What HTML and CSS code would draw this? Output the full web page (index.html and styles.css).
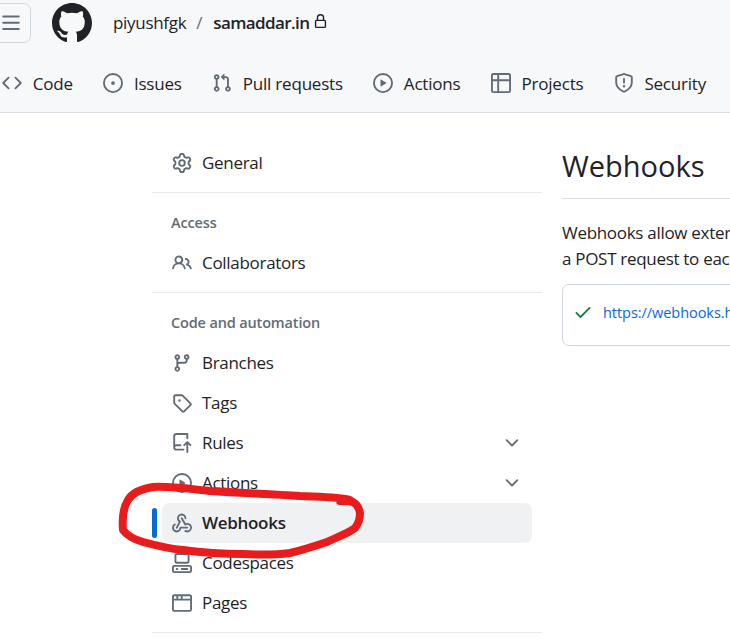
FILE: index.html
```html
<!DOCTYPE html>
<html lang="en">
<head>
<meta charset="UTF-8" />
<title>Webhooks</title>
<link rel="stylesheet" href="styles.css">
</head>
<body>

<header class="header">
  <div class="top-row">
    <button class="menu-btn" aria-label="Open menu">
      <svg class="icon" viewBox="0 0 16 16"><path d="M1 2.75A.75.75 0 0 1 1.75 2h12.5a.75.75 0 0 1 0 1.5H1.75A.75.75 0 0 1 1 2.75Zm0 5A.75.75 0 0 1 1.75 7h12.5a.75.75 0 0 1 0 1.5H1.75A.75.75 0 0 1 1 7.75ZM1.75 12h12.5a.75.75 0 0 1 0 1.5H1.75a.75.75 0 0 1 0-1.5Z"/></svg>
    </button>
    <svg class="logo" viewBox="0 0 16 16"><path d="M8 0c4.42 0 8 3.58 8 8a8.013 8.013 0 0 1-5.45 7.59c-.4.08-.55-.17-.55-.38 0-.27.01-1.13.01-2.2 0-.75-.25-1.23-.54-1.48 1.78-.2 3.65-.88 3.65-3.95 0-.88-.31-1.59-.82-2.15.08-.2.36-1.02-.08-2.12 0 0-.67-.22-2.2.82-.64-.18-1.32-.27-2-.27-.68 0-1.36.09-2 .27-1.53-1.03-2.2-.82-2.2-.82-.44 1.1-.16 1.92-.08 2.12-.51.56-.82 1.28-.82 2.15 0 3.06 1.86 3.75 3.64 3.95-.23.2-.44.55-.51 1.07-.46.21-1.61.55-2.33-.66-.15-.24-.6-.83-1.23-.82-.67.01-.27.38.01.53.34.19.73.9.82 1.13.16.45.68 1.31 2.69.94 0 .67.01 1.3.01 1.49 0 .21-.15.45-.55.38A7.995 7.995 0 0 1 0 8c0-4.42 3.58-8 8-8Z"/></svg>
    <span class="crumb">piyushfgk</span>
    <span class="crumb-sep">/</span>
    <strong class="crumb-repo">samaddar.in</strong>
    <svg class="lock" viewBox="0 0 16 16"><path d="M4 4a4 4 0 0 1 8 0v2h.25c.966 0 1.75.784 1.75 1.75v5.5A1.75 1.75 0 0 1 12.25 15h-8.5A1.75 1.75 0 0 1 2 13.25v-5.5C2 6.784 2.784 6 3.75 6H4Zm8.25 3.5h-8.5a.25.25 0 0 0-.25.25v5.5c0 .138.112.25.25.25h8.5a.25.25 0 0 0 .25-.25v-5.5a.25.25 0 0 0-.25-.25ZM10.5 6V4a2.5 2.5 0 1 0-5 0v2Z"/></svg>
  </div>
  <nav class="repo-nav">
    <a class="tab">
      <svg class="icon" viewBox="0 0 16 16"><path d="m11.28 3.22 4.25 4.25a.75.75 0 0 1 0 1.06l-4.25 4.25a.749.749 0 0 1-1.275-.326.749.749 0 0 1 .215-.734L13.94 8l-3.72-3.72a.749.749 0 0 1 .326-1.275.749.749 0 0 1 .734.215Zm-6.56 0a.751.751 0 0 1 1.042.018.751.751 0 0 1 .018 1.042L2.06 8l3.72 3.72a.749.749 0 0 1-.326 1.275.749.749 0 0 1-.734-.215L.47 8.53a.75.75 0 0 1 0-1.06Z"/></svg>
      Code
    </a>
    <a class="tab">
      <svg class="icon" viewBox="0 0 16 16"><path d="M8 9.5a1.5 1.5 0 1 0 0-3 1.5 1.5 0 0 0 0 3Z"/><path d="M8 0a8 8 0 1 1 0 16A8 8 0 0 1 8 0ZM1.5 8a6.5 6.5 0 1 0 13 0 6.5 6.5 0 0 0-13 0Z"/></svg>
      Issues
    </a>
    <a class="tab">
      <svg class="icon" viewBox="0 0 16 16"><path d="M1.5 3.25a2.25 2.25 0 1 1 3 2.122v5.256a2.251 2.251 0 1 1-1.5 0V5.372A2.25 2.25 0 0 1 1.5 3.25Zm5.677-.177L9.573.677A.25.25 0 0 1 10 .854V2.5h1A2.5 2.5 0 0 1 13.5 5v5.628a2.251 2.251 0 1 1-1.5 0V5a1 1 0 0 0-1-1h-1v1.646a.25.25 0 0 1-.427.177L7.177 3.427a.25.25 0 0 1 0-.354ZM3.75 2.5a.75.75 0 1 0 0 1.5.75.75 0 0 0 0-1.5Zm0 9.5a.75.75 0 1 0 0 1.5.75.75 0 0 0 0-1.5Zm8.25.75a.75.75 0 1 0 1.5 0 .75.75 0 0 0-1.5 0Z"/></svg>
      Pull requests
    </a>
    <a class="tab">
      <svg class="icon" viewBox="0 0 16 16"><path d="M8 0a8 8 0 1 1 0 16A8 8 0 0 1 8 0ZM1.5 8a6.5 6.5 0 1 0 13 0 6.5 6.5 0 0 0-13 0Zm4.879-2.773 4.264 2.559a.25.25 0 0 1 0 .428l-4.264 2.559A.25.25 0 0 1 6 10.559V5.442a.25.25 0 0 1 .379-.215Z"/></svg>
      Actions
    </a>
    <a class="tab">
      <svg class="icon" viewBox="0 0 16 16"><path d="M0 1.75C0 .784.784 0 1.75 0h12.5C15.216 0 16 .784 16 1.75v12.5A1.75 1.75 0 0 1 14.25 16H1.75A1.75 1.75 0 0 1 0 14.25ZM6.5 6.5v8h7.75a.25.25 0 0 0 .25-.25V6.5Zm8-1.5V1.75a.25.25 0 0 0-.25-.25H6.5V5Zm-13 1.5v7.75c0 .138.112.25.25.25H5v-8ZM5 5V1.5H1.75a.25.25 0 0 0-.25.25V5Z"/></svg>
      Projects
    </a>
    <a class="tab">
      <svg class="icon" viewBox="0 0 16 16"><path d="M7.467.133a1.748 1.748 0 0 1 1.066 0l5.25 1.68A1.75 1.75 0 0 1 15 3.48V7c0 1.566-.32 3.182-1.303 4.682-.983 1.498-2.585 2.813-5.032 3.855a1.697 1.697 0 0 1-1.33 0c-2.447-1.042-4.049-2.357-5.032-3.855C1.32 10.182 1 8.566 1 7V3.48a1.75 1.75 0 0 1 1.217-1.667Zm.61 1.429a.25.25 0 0 0-.153 0l-5.25 1.68a.25.25 0 0 0-.174.238V7c0 1.358.275 2.666 1.057 3.86.784 1.194 2.121 2.34 4.366 3.297a.196.196 0 0 0 .154 0c2.245-.956 3.582-2.104 4.366-3.298C13.225 9.666 13.5 8.36 13.5 7V3.48a.251.251 0 0 0-.174-.237l-5.25-1.68ZM8.75 4.75v3a.75.75 0 0 1-1.5 0v-3a.75.75 0 0 1 1.5 0ZM9 10.5a1 1 0 1 1-2 0 1 1 0 0 1 2 0Z"/></svg>
      Security
    </a>
  </nav>
</header>

<div class="layout">
  <aside class="sidebar">
    <div class="group">
      <a class="item">
        <svg class="icon" viewBox="0 0 16 16"><path d="M8 0a8.2 8.2 0 0 1 .701.031C9.444.095 9.99.645 10.16 1.29l.288 1.107c.018.066.079.158.212.224.231.114.454.243.668.386.123.082.233.09.299.071l1.103-.303c.644-.176 1.392.021 1.82.63.27.385.506.792.704 1.218.315.675.111 1.422-.364 1.891l-.814.806c-.049.048-.098.147-.088.294.016.257.016.515 0 .772-.01.147.038.246.088.294l.814.806c.475.469.679 1.216.364 1.891a7.977 7.977 0 0 1-.704 1.217c-.428.61-1.176.807-1.82.63l-1.102-.302c-.067-.019-.177-.011-.3.071a5.909 5.909 0 0 1-.668.386c-.133.066-.194.158-.211.224l-.29 1.106c-.168.646-.715 1.196-1.458 1.26a8.006 8.006 0 0 1-1.402 0c-.743-.064-1.289-.614-1.458-1.26l-.289-1.106c-.018-.066-.079-.158-.212-.224a5.738 5.738 0 0 1-.668-.386c-.123-.082-.233-.09-.299-.071l-1.103.303c-.644.176-1.392-.021-1.82-.63a8.12 8.12 0 0 1-.704-1.218c-.315-.675-.111-1.422.363-1.891l.815-.806c.05-.048.098-.147.088-.294a6.214 6.214 0 0 1 0-.772c.01-.147-.038-.246-.088-.294l-.815-.806C.635 6.045.431 5.298.746 4.623a7.92 7.92 0 0 1 .704-1.217c.428-.61 1.176-.807 1.82-.63l1.102.302c.067.019.177.011.3-.071.214-.143.437-.272.668-.386.133-.066.194-.158.211-.224l.29-1.106C6.009.645 6.556.095 7.299.03 7.53.01 7.764 0 8 0Zm-.571 1.525c-.036.003-.108.036-.137.146l-.289 1.105c-.147.561-.549.967-.998 1.189-.173.086-.34.183-.5.29-.417.278-.97.423-1.529.27l-1.103-.303c-.109-.03-.175.016-.195.045-.22.312-.412.644-.573.99-.014.031-.021.11.059.19l.815.806c.411.406.562.957.53 1.456a4.709 4.709 0 0 0 0 .582c.032.499-.119 1.05-.53 1.456l-.815.806c-.081.08-.073.159-.059.19.162.346.353.677.573.989.02.03.085.076.195.046l1.102-.303c.56-.153 1.113-.008 1.53.27.161.107.328.204.501.29.447.222.85.629.997 1.189l.289 1.105c.029.109.101.143.137.146a6.6 6.6 0 0 0 1.142 0c.036-.003.108-.036.137-.146l.289-1.105c.147-.561.549-.967.998-1.189.173-.086.34-.183.5-.29.417-.278.97-.423 1.529-.27l1.103.303c.109.029.175-.016.195-.045.22-.313.411-.644.573-.99.014-.031.021-.11-.059-.19l-.815-.806c-.411-.406-.562-.957-.53-1.456a4.709 4.709 0 0 0 0-.582c-.032-.499.119-1.05.53-1.456l.815-.806c.081-.08.073-.159.059-.19a6.464 6.464 0 0 0-.573-.989c-.02-.03-.085-.076-.195-.046l-1.102.303c-.56.153-1.113.008-1.53-.27a4.44 4.44 0 0 0-.501-.29c-.447-.222-.85-.629-.997-1.189l-.289-1.105c-.029-.11-.101-.143-.137-.146a6.6 6.6 0 0 0-1.142 0ZM11 8a3 3 0 1 1-6 0 3 3 0 0 1 6 0ZM9.5 8a1.5 1.5 0 1 0-3.001.001A1.5 1.5 0 0 0 9.5 8Z"/></svg>
        <span class="label">General</span>
      </a>
    </div>
    <div class="group">
      <h3 class="group-title">Access</h3>
      <a class="item">
        <svg class="icon" viewBox="0 0 16 16"><path d="M2 5.5a3.5 3.5 0 1 1 5.898 2.549 5.508 5.508 0 0 1 3.034 4.084.75.75 0 1 1-1.482.235 4 4 0 0 0-7.9 0 .75.75 0 0 1-1.482-.236A5.507 5.507 0 0 1 3.102 8.05 3.493 3.493 0 0 1 2 5.5ZM11 4a3.001 3.001 0 0 1 2.22 5.018 5.01 5.01 0 0 1 2.56 3.012.749.749 0 0 1-.885.954.752.752 0 0 1-.549-.514 3.507 3.507 0 0 0-2.522-2.372.75.75 0 0 1-.574-.73v-.352a.75.75 0 0 1 .416-.672A1.5 1.5 0 0 0 11 5.5.75.75 0 0 1 11 4Zm-5.5-.5a2 2 0 1 0-.001 3.999A2 2 0 0 0 5.5 3.5Z"/></svg>
        <span class="label">Collaborators</span>
      </a>
    </div>
    <div class="group">
      <h3 class="group-title">Code and automation</h3>
      <a class="item">
        <svg class="icon" viewBox="0 0 16 16"><path d="M9.5 3.25a2.25 2.25 0 1 1 3 2.122V6A2.5 2.5 0 0 1 10 8.5H6a1 1 0 0 0-1 1v1.128a2.251 2.251 0 1 1-1.5 0V5.372a2.25 2.25 0 1 1 1.5 0v1.836A2.493 2.493 0 0 1 6 7h4a1 1 0 0 0 1-1v-.628A2.25 2.25 0 0 1 9.5 3.25Zm-6 0a.75.75 0 1 0 1.5 0 .75.75 0 0 0-1.5 0Zm8.25-.75a.75.75 0 1 0 0 1.5.75.75 0 0 0 0-1.5ZM4.25 12a.75.75 0 1 0 0 1.5.75.75 0 0 0 0-1.5Z"/></svg>
        <span class="label">Branches</span>
      </a>
      <a class="item">
        <svg class="icon" viewBox="0 0 16 16"><path d="M1 7.775V2.75C1 1.784 1.784 1 2.75 1h5.025c.464 0 .91.184 1.238.513l6.25 6.25a1.75 1.75 0 0 1 0 2.474l-5.026 5.026a1.75 1.75 0 0 1-2.474 0l-6.25-6.25A1.752 1.752 0 0 1 1 7.775Zm1.5 0c0 .066.026.13.073.177l6.25 6.25a.25.25 0 0 0 .354 0l5.025-5.025a.25.25 0 0 0 0-.354l-6.25-6.25a.25.25 0 0 0-.177-.073H2.75a.25.25 0 0 0-.25.25ZM6 5a1 1 0 1 1 0 2 1 1 0 0 1 0-2Z"/></svg>
        <span class="label">Tags</span>
      </a>
      <a class="item">
        <svg class="icon" viewBox="0 0 16 16"><path d="M1 2.5A2.5 2.5 0 0 1 3.5 0h8.75a.75.75 0 0 1 .75.75v3.5a.75.75 0 0 1-1.5 0V1.5h-8a1 1 0 0 0-1 1v6.708A2.493 2.493 0 0 1 3.5 9h3.25a.75.75 0 0 1 0 1.5H3.5a1 1 0 0 0 0 2h5.75a.75.75 0 0 1 0 1.5H3.5A2.5 2.5 0 0 1 1 11.5Zm13.23 7.79h-.001l-1.224-1.224v6.184a.75.75 0 0 1-1.5 0V9.066L10.28 10.29a.75.75 0 0 1-1.06-1.061l2.505-2.504a.75.75 0 0 1 1.06 0L15.29 9.23a.751.751 0 0 1-.018 1.042.751.751 0 0 1-1.042.018Z"/></svg>
        <span class="label">Rules</span>
        <svg class="chevron" viewBox="0 0 16 16"><path d="M12.78 5.22a.749.749 0 0 1 0 1.06l-4.25 4.25a.749.749 0 0 1-1.06 0L3.22 6.28a.749.749 0 1 1 1.06-1.06L8 8.939l3.72-3.719a.749.749 0 0 1 1.06 0Z"/></svg>
      </a>
      <a class="item">
        <svg class="icon" viewBox="0 0 16 16"><path d="M8 0a8 8 0 1 1 0 16A8 8 0 0 1 8 0ZM1.5 8a6.5 6.5 0 1 0 13 0 6.5 6.5 0 0 0-13 0Zm4.879-2.773 4.264 2.559a.25.25 0 0 1 0 .428l-4.264 2.559A.25.25 0 0 1 6 10.559V5.442a.25.25 0 0 1 .379-.215Z"/></svg>
        <span class="label">Actions</span>
        <svg class="chevron" viewBox="0 0 16 16"><path d="M12.78 5.22a.749.749 0 0 1 0 1.06l-4.25 4.25a.749.749 0 0 1-1.06 0L3.22 6.28a.749.749 0 1 1 1.06-1.06L8 8.939l3.72-3.719a.749.749 0 0 1 1.06 0Z"/></svg>
      </a>
      <a class="item active">
        <svg class="icon" viewBox="0 0 16 16"><path d="M5.5 4.25a2.25 2.25 0 0 1 4.5 0 .75.75 0 0 0 1.5 0 3.75 3.75 0 1 0-6.14 2.889l-2.272 4.258a.75.75 0 0 0 1.324.706L7 7.25a.75.75 0 0 0-.309-1.015A2.25 2.25 0 0 1 5.5 4.25Z"/><path d="M7.364 3.607a.75.75 0 0 1 1.03.257l2.608 4.349a3.75 3.75 0 1 1-.628 6.785.75.75 0 0 1 .752-1.299 2.25 2.25 0 1 0-.033-3.88.75.75 0 0 1-1.03-.256L7.107 4.636a.75.75 0 0 1 .257-1.03Z"/><path d="M2.9 8.776A.75.75 0 0 1 2.625 9.8 2.25 2.25 0 1 0 6 11.75a.75.75 0 0 1 .75-.751h5.5a.75.75 0 0 1 0 1.5H7.425a3.751 3.751 0 1 1-5.55-3.998.75.75 0 0 1 1.024.274Z"/></svg>
        <span class="label">Webhooks</span>
      </a>
      <a class="item">
        <svg class="icon" viewBox="0 0 16 16"><path d="M0 11.25c0-.966.784-1.75 1.75-1.75h12.5c.966 0 1.75.784 1.75 1.75v3A1.75 1.75 0 0 1 14.25 16H1.75A1.75 1.75 0 0 1 0 14.25Zm2-9.5C2 .784 2.784 0 3.75 0h8.5C13.216 0 14 .784 14 1.75v5a1.75 1.75 0 0 1-1.75 1.75h-8.5A1.75 1.75 0 0 1 2 6.75Zm1.75-.25a.25.25 0 0 0-.25.25v5c0 .138.112.25.25.25h8.5a.25.25 0 0 0 .25-.25v-5a.25.25 0 0 0-.25-.25Zm-2 9.5a.25.25 0 0 0-.25.25v3c0 .138.112.25.25.25h12.5a.25.25 0 0 0 .25-.25v-3a.25.25 0 0 0-.25-.25Z"/><path d="M7 12.75a.75.75 0 0 1 .75-.75h4.5a.75.75 0 0 1 0 1.5h-4.5a.75.75 0 0 1-.75-.75Zm-4 0a.75.75 0 0 1 .75-.75h.5a.75.75 0 0 1 0 1.5h-.5a.75.75 0 0 1-.75-.75Z"/></svg>
        <span class="label">Codespaces</span>
      </a>
      <a class="item">
        <svg class="icon" viewBox="0 0 16 16"><path d="M0 2.75C0 1.784.784 1 1.75 1h12.5c.966 0 1.75.784 1.75 1.75v10.5A1.75 1.75 0 0 1 14.25 15H1.75A1.75 1.75 0 0 1 0 13.25ZM14.5 6h-13v7.25c0 .138.112.25.25.25h12.5a.25.25 0 0 0 .25-.25Zm-6-3.5v2h6V2.75a.25.25 0 0 0-.25-.25ZM5 2.5v2h2v-2Zm-3.25 0a.25.25 0 0 0-.25.25V4.5h2v-2Z"/></svg>
        <span class="label">Pages</span>
      </a>
    </div>
  </aside>

  <main class="content">
    <h2 class="title">Webhooks</h2>
    <p class="lead">Webhooks allow external services to be notified when certain events happen. When the specified events happen, we'll send<br>a POST request to each of the URLs you provide.</p>
    <div class="hook-box">
      <svg class="check" viewBox="0 0 16 16"><path d="M13.78 4.22a.75.75 0 0 1 0 1.06l-7.25 7.25a.75.75 0 0 1-1.06 0L2.22 9.28a.751.751 0 0 1 .018-1.042.751.751 0 0 1 1.042-.018L6 10.94l6.72-6.72a.75.75 0 0 1 1.06 0Z"/></svg>
      <a class="hook-link">https://webhooks.hostinger.com/deploy/samaddar</a>
    </div>
  </main>
</div>

<!-- hand drawn marker circle on top of the screenshot -->
<svg class="scribble" viewBox="0 0 730 640">
  <path d="M350 500 C340 497 323 497 300 496 C270 494 240 493 210 491 C190 489 170 486 153 487 C140 489 132 493 128 500 C123 508 122 518 123 530 C128 537 136 540 143 542 C158 546 170 549 183 550 C205 553 225 554 243 554 C260 555 275 555 290 553 C303 550 315 546 327 542 C337 537 347 534 355 528 C359 523 360 518 360 513 C359 508 357 504 353 502 C349 501 345 501 340 501"/>
</svg>

</body>
</html>
```

FILE: styles.css
```css
html, body {
  margin: 0;
  height: 640px;
  overflow: hidden;
}
body {
  position: relative;
  background: #fff;
  color: #1f2328;
  font-family: "Open Sans", "Noto Sans", Arial, sans-serif;
  font-size: 17px;
  letter-spacing: -0.3px;
}
a {
  color: inherit;
  text-decoration: none;
}
.icon {
  width: 20px;
  height: 20px;
  fill: #636c76;
  flex: none;
}

/* header */
.header {
  background: #f6f8fa;
  border-bottom: 1px solid #d8dee4;
  padding-top: 3px;
  box-sizing: border-box;
  height: 113px;
}
.top-row {
  display: flex;
  align-items: center;
  height: 40px;
  margin-left: -9px;
}
.menu-btn {
  width: 40px;
  height: 40px;
  padding: 0;
  display: flex;
  align-items: center;
  justify-content: center;
  background: #f6f8fa;
  border: 1px solid #d0d7de;
  border-radius: 7px;
  flex: none;
}
.logo {
  width: 40px;
  height: 40px;
  fill: #1f2328;
  margin-left: 21px;
  flex: none;
}
.crumb {
  margin: -2px 0 0 21px;
  color: #1f2328;
}
.crumb-sep {
  margin: -2px 11px 0 10px;
  color: #636c76;
}
.crumb-repo {
  margin-top: -2px;
  font-weight: 600;
  letter-spacing: -0.6px;
}
.lock {
  width: 15px;
  height: 15px;
  fill: #1f2328;
  margin: -3px 0 0 4px;
}
.repo-nav {
  display: flex;
  align-items: center;
  gap: 30.2px;
  height: 58px;
  margin: 11px 0 0 2px;
  letter-spacing: -0.2px;
  white-space: nowrap;
}
.tab {
  display: flex;
  align-items: center;
  gap: 10.8px;
}

/* sidebar + main */
.layout {
  display: flex;
  gap: 20px;
  padding: 30px 0 0 152px;
}
.sidebar {
  width: 390px;
  flex: none;
}
.group {
  padding-bottom: 9px;
  border-bottom: 1px solid #e6e9ed;
}
.group-title {
  margin: 0;
  padding: 20px 19px 10px;
  font-size: 14.5px;
  font-weight: 600;
  letter-spacing: -0.15px;
  line-height: 20px;
  color: #636c76;
}
.item {
  position: relative;
  display: flex;
  align-items: center;
  gap: 10px;
  height: 40px;
  margin: 0 10px;
  padding: 0 10px;
  border-radius: 7px;
}
.label {
  margin-top: -2px;
}
.item.active {
  background: #eff1f3;
  font-weight: 600;
}
.item.active::before {
  content: "";
  position: absolute;
  left: -10px;
  top: 5px;
  width: 5px;
  height: 30px;
  border-radius: 3px;
  background: #0969da;
}
.chevron {
  width: 20px;
  height: 20px;
  fill: #636c76;
  margin-left: auto;
}
.content {
  width: 600px;
  flex: none;
  white-space: nowrap;
}
.title {
  margin: 0;
  height: 55px;
  font-size: 29px;
  font-weight: 400;
  letter-spacing: 0;
  line-height: 45px;
  border-bottom: 1px solid #d8dee4;
}
.lead {
  margin: 21px 0 0;
  line-height: 26px;
}
.hook-box {
  display: flex;
  align-items: center;
  gap: 10px;
  height: 54px;
  margin-top: 12px;
  padding: 0 0 6px 10px;
  border: 1px solid #d0d7de;
  border-radius: 7px;
}
.check {
  width: 20px;
  height: 20px;
  fill: #1a7f37;
}
.hook-link {
  color: #0969da;
  font-size: 14.5px;
  letter-spacing: -0.05px;
}
.scribble {
  position: absolute;
  left: 0;
  top: 0;
  width: 730px;
  height: 640px;
  pointer-events: none;
}
.scribble path {
  fill: none;
  stroke: #e81c1c;
  stroke-width: 8;
  stroke-linecap: round;
  stroke-linejoin: round;
}
```
